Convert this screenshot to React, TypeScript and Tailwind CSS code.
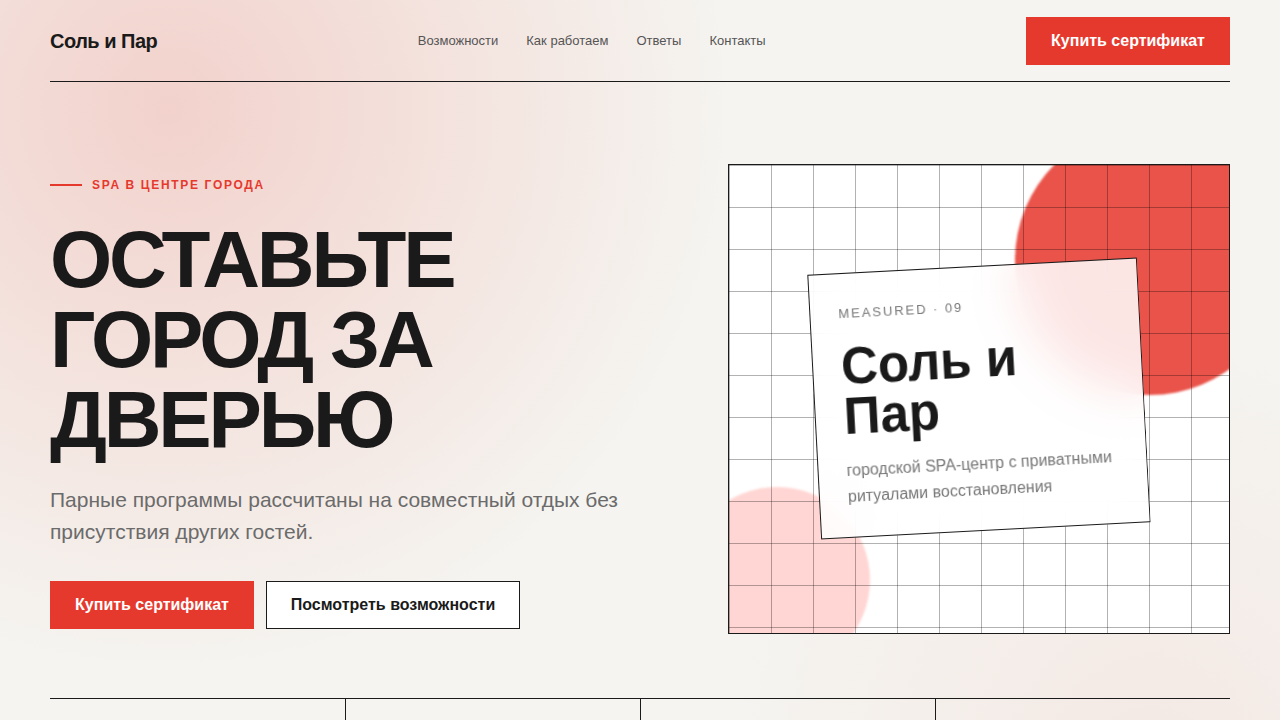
import React from 'react';

const navLinks = ['Возможности', 'Как работаем', 'Ответы', 'Контакты'];

const features = [
  { num: '01', title: 'Приватные парные', text: 'Только вы и ваш гость на всё время ритуала.' },
  { num: '02', title: 'Соляная комната', text: 'Тёплый воздух и мягкий свет для глубокого отдыха.' },
  { num: '03', title: 'Травяные чаи', text: 'Авторские сборы после каждой программы.' },
  { num: '04', title: 'Сертификаты', text: 'Электронный подарок в день покупки.' },
];

const Header: React.FC = () => (
  <header className="mx-auto flex h-[82px] max-w-[1180px] items-center justify-between border-b border-[#1a1a1a]">
    <a href="#" className="text-[20px] font-bold tracking-tight text-[#1a1a1a]">
      Соль и Пар
    </a>
    <nav className="flex items-center gap-7 text-[13px] text-[#555]">
      {navLinks.map((link) => (
        <a key={link} href="#">
          {link}
        </a>
      ))}
    </nav>
    <button className="h-12 w-[204px] bg-[#e6392e] text-[16px] font-bold text-white">
      Купить сертификат
    </button>
  </header>
);

const HeroCard: React.FC = () => (
  <div className="relative flex h-[470px] items-center justify-center overflow-hidden border border-[#1a1a1a] bg-white">
    {/* decorative circles under the grid */}
    <div className="absolute left-[286px] top-[-40px] h-[270px] w-[270px] rounded-full bg-[#e9534a] blur-[1px]" />
    <div className="absolute left-[-45px] top-[322px] h-[186px] w-[186px] rounded-full bg-[#ffd6d3] blur-[1px]" />
    <div className="absolute inset-0 bg-[linear-gradient(to_right,rgba(0,0,0,0.3)_1px,transparent_1px),linear-gradient(to_bottom,rgba(0,0,0,0.3)_1px,transparent_1px)] bg-[size:42px_42px]" />

    <div className="relative z-10 w-[330px] -rotate-3 border border-[#1a1a1a] bg-white/85 px-7 pt-8 pb-7 backdrop-blur-xl">
      <div className="text-[13px] leading-4 tracking-[0.15em] text-[#777]">MEASURED · 09</div>
      <h2 className="mt-[20px] text-[51px] font-bold leading-[50px] text-[#1a1a1a]">
        Соль и
        <br />
        Пар
      </h2>
      <p className="mt-4 text-[16px] leading-[1.6] text-[#777]">
        городской SPA-центр с приватными ритуалами восстановления
      </p>
    </div>
  </div>
);

export default function App() {
  return (
    <div className="relative min-h-screen overflow-hidden bg-[#f5f4f0] font-['Liberation_Sans',Arial,sans-serif] text-[#1a1a1a]">
      <div className="pointer-events-none absolute inset-0 bg-[radial-gradient(circle_560px_at_170px_110px,rgba(236,130,120,0.3),transparent),radial-gradient(circle_420px_at_1150px_760px,rgba(236,150,140,0.12),transparent)]" />

      <div className="relative px-[50px]">
        <Header />

        <section className="mx-auto grid max-w-[1180px] grid-cols-[1fr_502px] items-center pt-[82px] pb-16">
          <div className="pt-2">
            <div className="flex items-center gap-2.5">
              <span className="h-[2px] w-8 bg-[#e6392e]" />
              <span className="text-[12px] font-bold leading-4 tracking-[0.14em] text-[#e6392e]">
                SPA В ЦЕНТРЕ ГОРОДА
              </span>
            </div>
            <h1 className="mt-[27px] text-[80px] font-bold leading-none tracking-[-0.04em] text-[#1a1a1a]">
              <span className="block">ОСТАВЬТЕ</span>
              <span className="block">ГОРОД ЗА</span>
              <span className="block">ДВЕРЬЮ</span>
            </h1>
            <p className="mt-6 max-w-[600px] text-[21px] leading-8 text-[#6b6b6b]">
              Парные программы рассчитаны на совместный отдых без присутствия других гостей.
            </p>
            <div className="mt-[33px] flex gap-3">
              <button className="h-12 w-[204px] bg-[#e6392e] text-[16px] font-bold text-white">
                Купить сертификат
              </button>
              <button className="h-12 w-[254px] border border-[#1a1a1a] bg-white text-[16px] font-bold text-[#1a1a1a]">
                Посмотреть возможности
              </button>
            </div>
          </div>

          <HeroCard />
        </section>

        <section className="mx-auto grid max-w-[1180px] grid-cols-4 border-t border-[#1a1a1a]">
          {features.map((f, i) => (
            <div key={f.num} className={`px-6 pt-7 pb-10 ${i > 0 ? 'border-l border-[#1a1a1a]' : ''}`}>
              <div className="text-[12px] font-bold tracking-[0.1em] text-[#e6392e]">{f.num}</div>
              <h3 className="mt-3 text-[20px] font-bold">{f.title}</h3>
              <p className="mt-2 text-[14px] leading-6 text-[#6b6b6b]">{f.text}</p>
            </div>
          ))}
        </section>
      </div>
    </div>
  );
}
